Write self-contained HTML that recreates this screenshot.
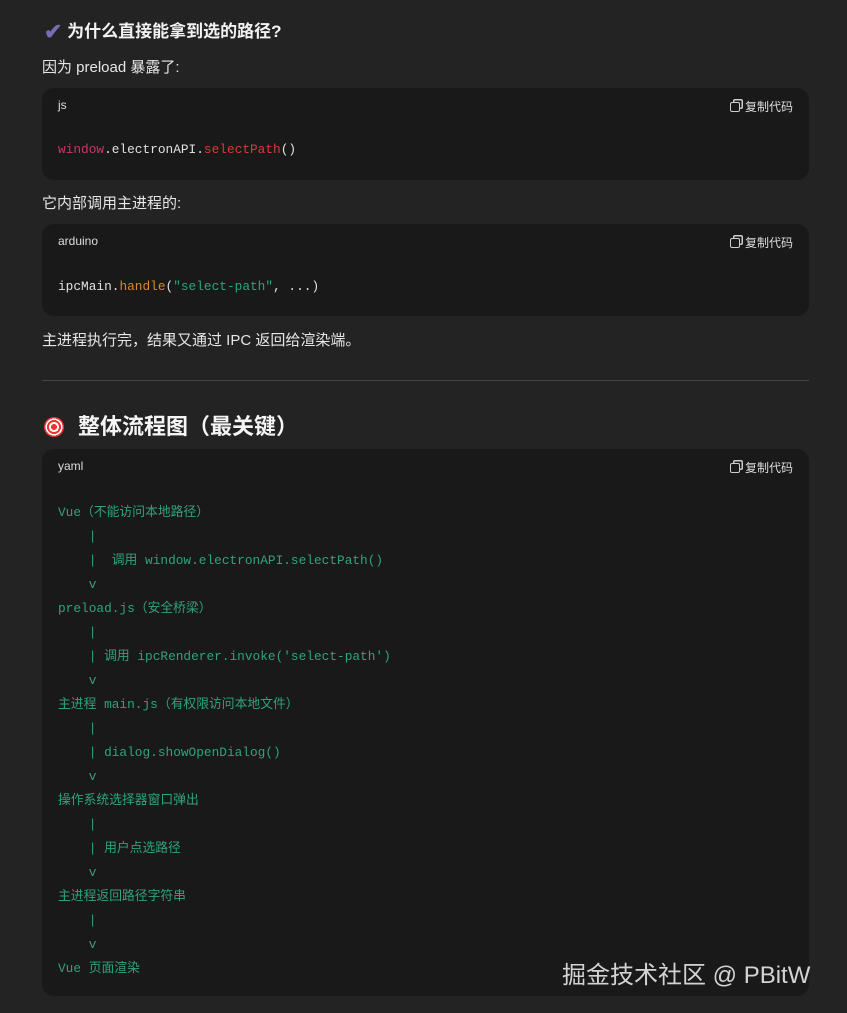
<!DOCTYPE html>
<html><head><meta charset="utf-8"><style>
body{margin:0;width:847px;height:1013px;background:#232323;color:#e8e8e8;font-family:"Liberation Sans","Noto Sans CJK SC",sans-serif;position:relative;overflow:hidden}
.a{position:absolute;white-space:pre}
.t{font-size:15px;color:#e6e6e6}
.blk{position:absolute;left:42px;width:767px;background:#191919;border-radius:12px}
.lab{position:absolute;left:16px;top:10px;font-size:12px;color:#ddd}
.cp{position:absolute;right:16px;top:10px;font-size:12px;color:#ddd}
.cp:before{content:"";display:inline-block;width:8px;height:8px;border:1.5px solid #ccc;border-radius:2px;margin-right:5px;vertical-align:-1px;box-shadow:3px -3px 0 -1.5px #191919,3px -3px 0 0 #ccc}
.code{position:absolute;left:16px;font-family:"Liberation Mono","Noto Sans CJK SC",monospace;font-size:12.8px;white-space:pre;color:#e0e0e0}
.g{color:#2fa37a}
</style></head><body>
<div class="a" style="left:44px;top:17px;font-size:17px;font-weight:bold;color:#f2f2f2"><span style="color:#7b6bb0;font-size:22px;vertical-align:-2px">✔</span> 为什么直接能拿到选的路径?</div>
<div class="a t" style="left:42px;top:56px">因为 preload 暴露了:</div>
<div class="blk" style="top:88px;height:92px"><div class="lab">js</div><div class="cp">复制代码</div>
<div class="code" style="top:54px"><span style="color:#c8366a">window</span>.electronAPI.<span style="color:#e0363a">selectPath</span>()</div></div>
<div class="a t" style="left:42px;top:192px">它内部调用主进程的:</div>
<div class="blk" style="top:224px;height:92px"><div class="lab">arduino</div><div class="cp">复制代码</div>
<div class="code" style="top:55px">ipcMain.<span style="color:#d98a2b">handle</span>(<span class="g">"select-path"</span>, ...)</div></div>
<div class="a t" style="left:42px;top:329px">主进程执行完，结果又通过 IPC 返回给渲染端。</div>
<div class="a" style="left:42px;top:380px;width:767px;height:1px;background:#444"></div>
<div class="a" style="left:44px;top:409px;font-size:22px;font-weight:bold;color:#f5f5f5"><span style="display:inline-block;width:20px;height:20px;border-radius:50%;background:radial-gradient(circle,#e33 0 3px,#fff 3px 5px,#e33 5px 7px,#fff 7px 8.5px,#e33 8.5px);vertical-align:-3px;margin-right:14px"></span>整体流程图（最关键）</div>
<div class="blk" style="top:449px;height:547px"><div class="lab">yaml</div><div class="cp">复制代码</div>
<div class="code g" style="top:52px;line-height:24px">Vue（不能访问本地路径）
    |
    |  调用 window.electronAPI.selectPath()
    v
preload.js（安全桥梁）
    |
    | 调用 ipcRenderer.invoke('select-path')
    v
主进程 main.js（有权限访问本地文件）
    |
    | dialog.showOpenDialog()
    v
操作系统选择器窗口弹出
    |
    | 用户点选路径
    v
主进程返回路径字符串
    |
    v
Vue 页面渲染</div></div>
<div class="a" style="left:562px;top:955px;font-size:24px;color:#e8e8e8;opacity:.9">掘金技术社区 @ PBitW</div>
</body></html>
